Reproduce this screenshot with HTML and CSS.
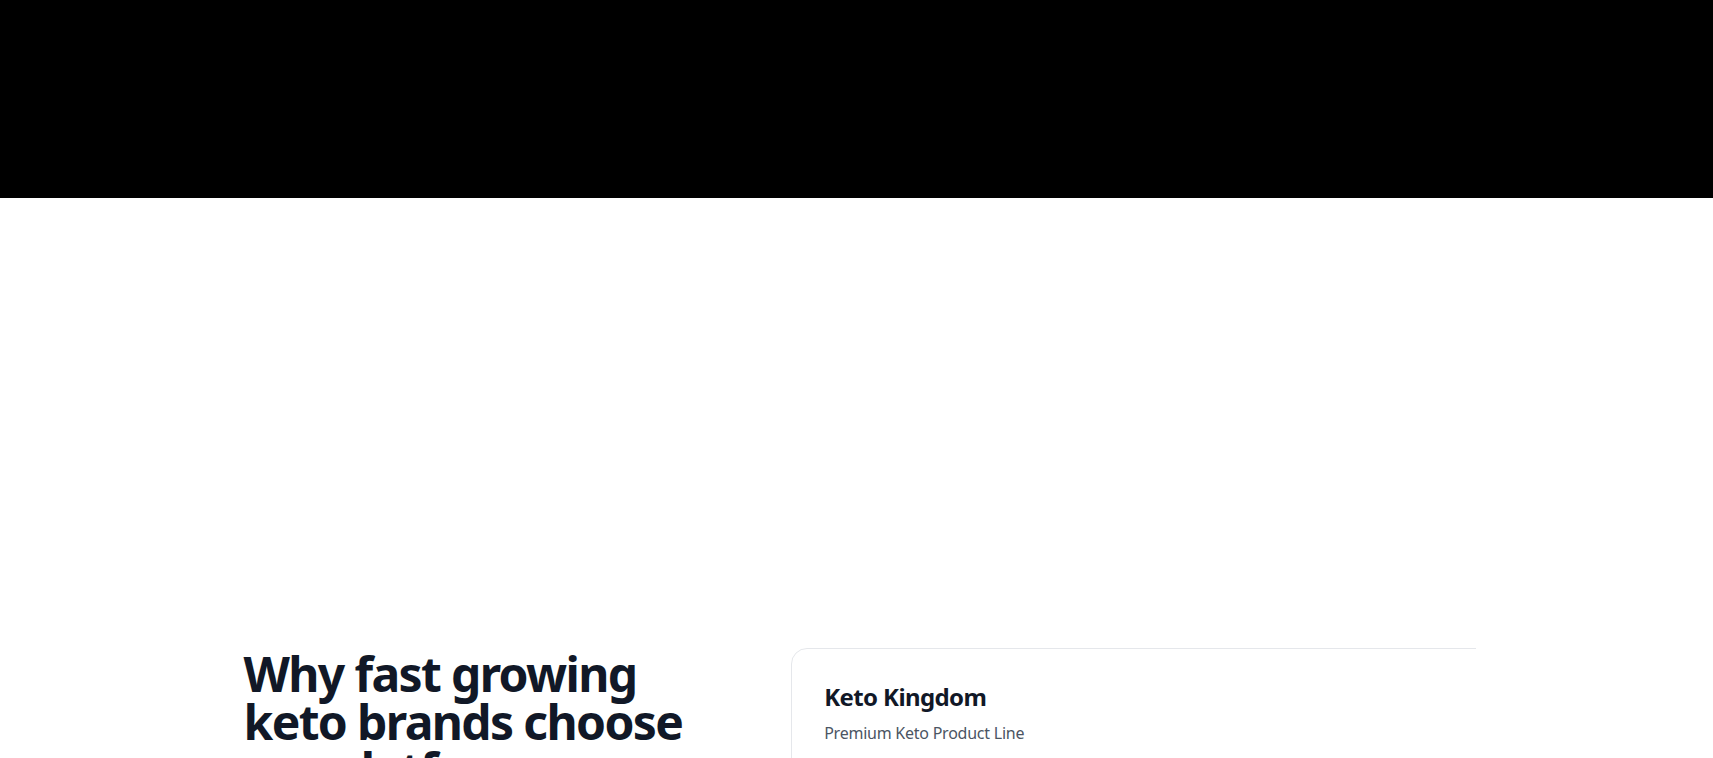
FILE: index.html
```html
<!DOCTYPE html>
<html lang="en">
<head>
<meta charset="utf-8">
<title>Why fast growing keto brands choose our platform</title>
<link rel="stylesheet" href="styles.css">
</head>
<body>
<header class="topbar"></header>
<section class="why">
  <div class="container why-grid">
    <div class="intro">
      <h2 class="why-title">Why fast growing keto brands choose our platform</h2>
    </div>
    <div class="cases">
      <div class="cases-track">
        <article class="case-card">
          <h3 class="case-name">Keto Kingdom</h3>
          <p class="case-sub">Premium Keto Product Line</p>
        </article>
      </div>
    </div>
  </div>
</section>
</body>
</html>
```

FILE: styles.css
```css
* { box-sizing: border-box; }
html, body { margin: 0; padding: 0; background: #ffffff; }
body {
  font-family: "Noto Sans", "Open Sans", sans-serif;
  color: #111827;
  overflow: hidden;
}
.topbar {
  height: 198px;
  background: #000000;
}
.why {
  padding-top: 450px;
}
.container {
  max-width: 1280px;
  margin: 0 auto;
  padding: 0 24px;
}
.why-grid {
  display: grid;
  grid-template-columns: 5fr 7fr;
  column-gap: 64px;
  align-items: start;
}
.intro {
  padding-left: 3px;
}
.why-title {
  margin: 2px 0 0;
  font-size: 48px;
  line-height: 48px;
  font-weight: 700;
  letter-spacing: -0.034em;
  color: #111827;
}
.cases {
  overflow: hidden;
  margin-right: -3px;
}
.cases-track {
  display: flex;
  gap: 24px;
}
.case-card {
  flex: 0 0 auto;
  width: 820px;
  border: 1px solid #e5e7eb;
  border-radius: 16px;
  padding: 32px;
  background: #ffffff;
}
.case-name {
  margin: 0;
  font-size: 24px;
  line-height: 32px;
  font-weight: 700;
  letter-spacing: -0.025em;
  color: #111827;
}
.case-sub {
  margin: 8px 0 0;
  font-size: 16px;
  line-height: 24px;
  letter-spacing: -0.015em;
  color: #4b5563;
}
```
